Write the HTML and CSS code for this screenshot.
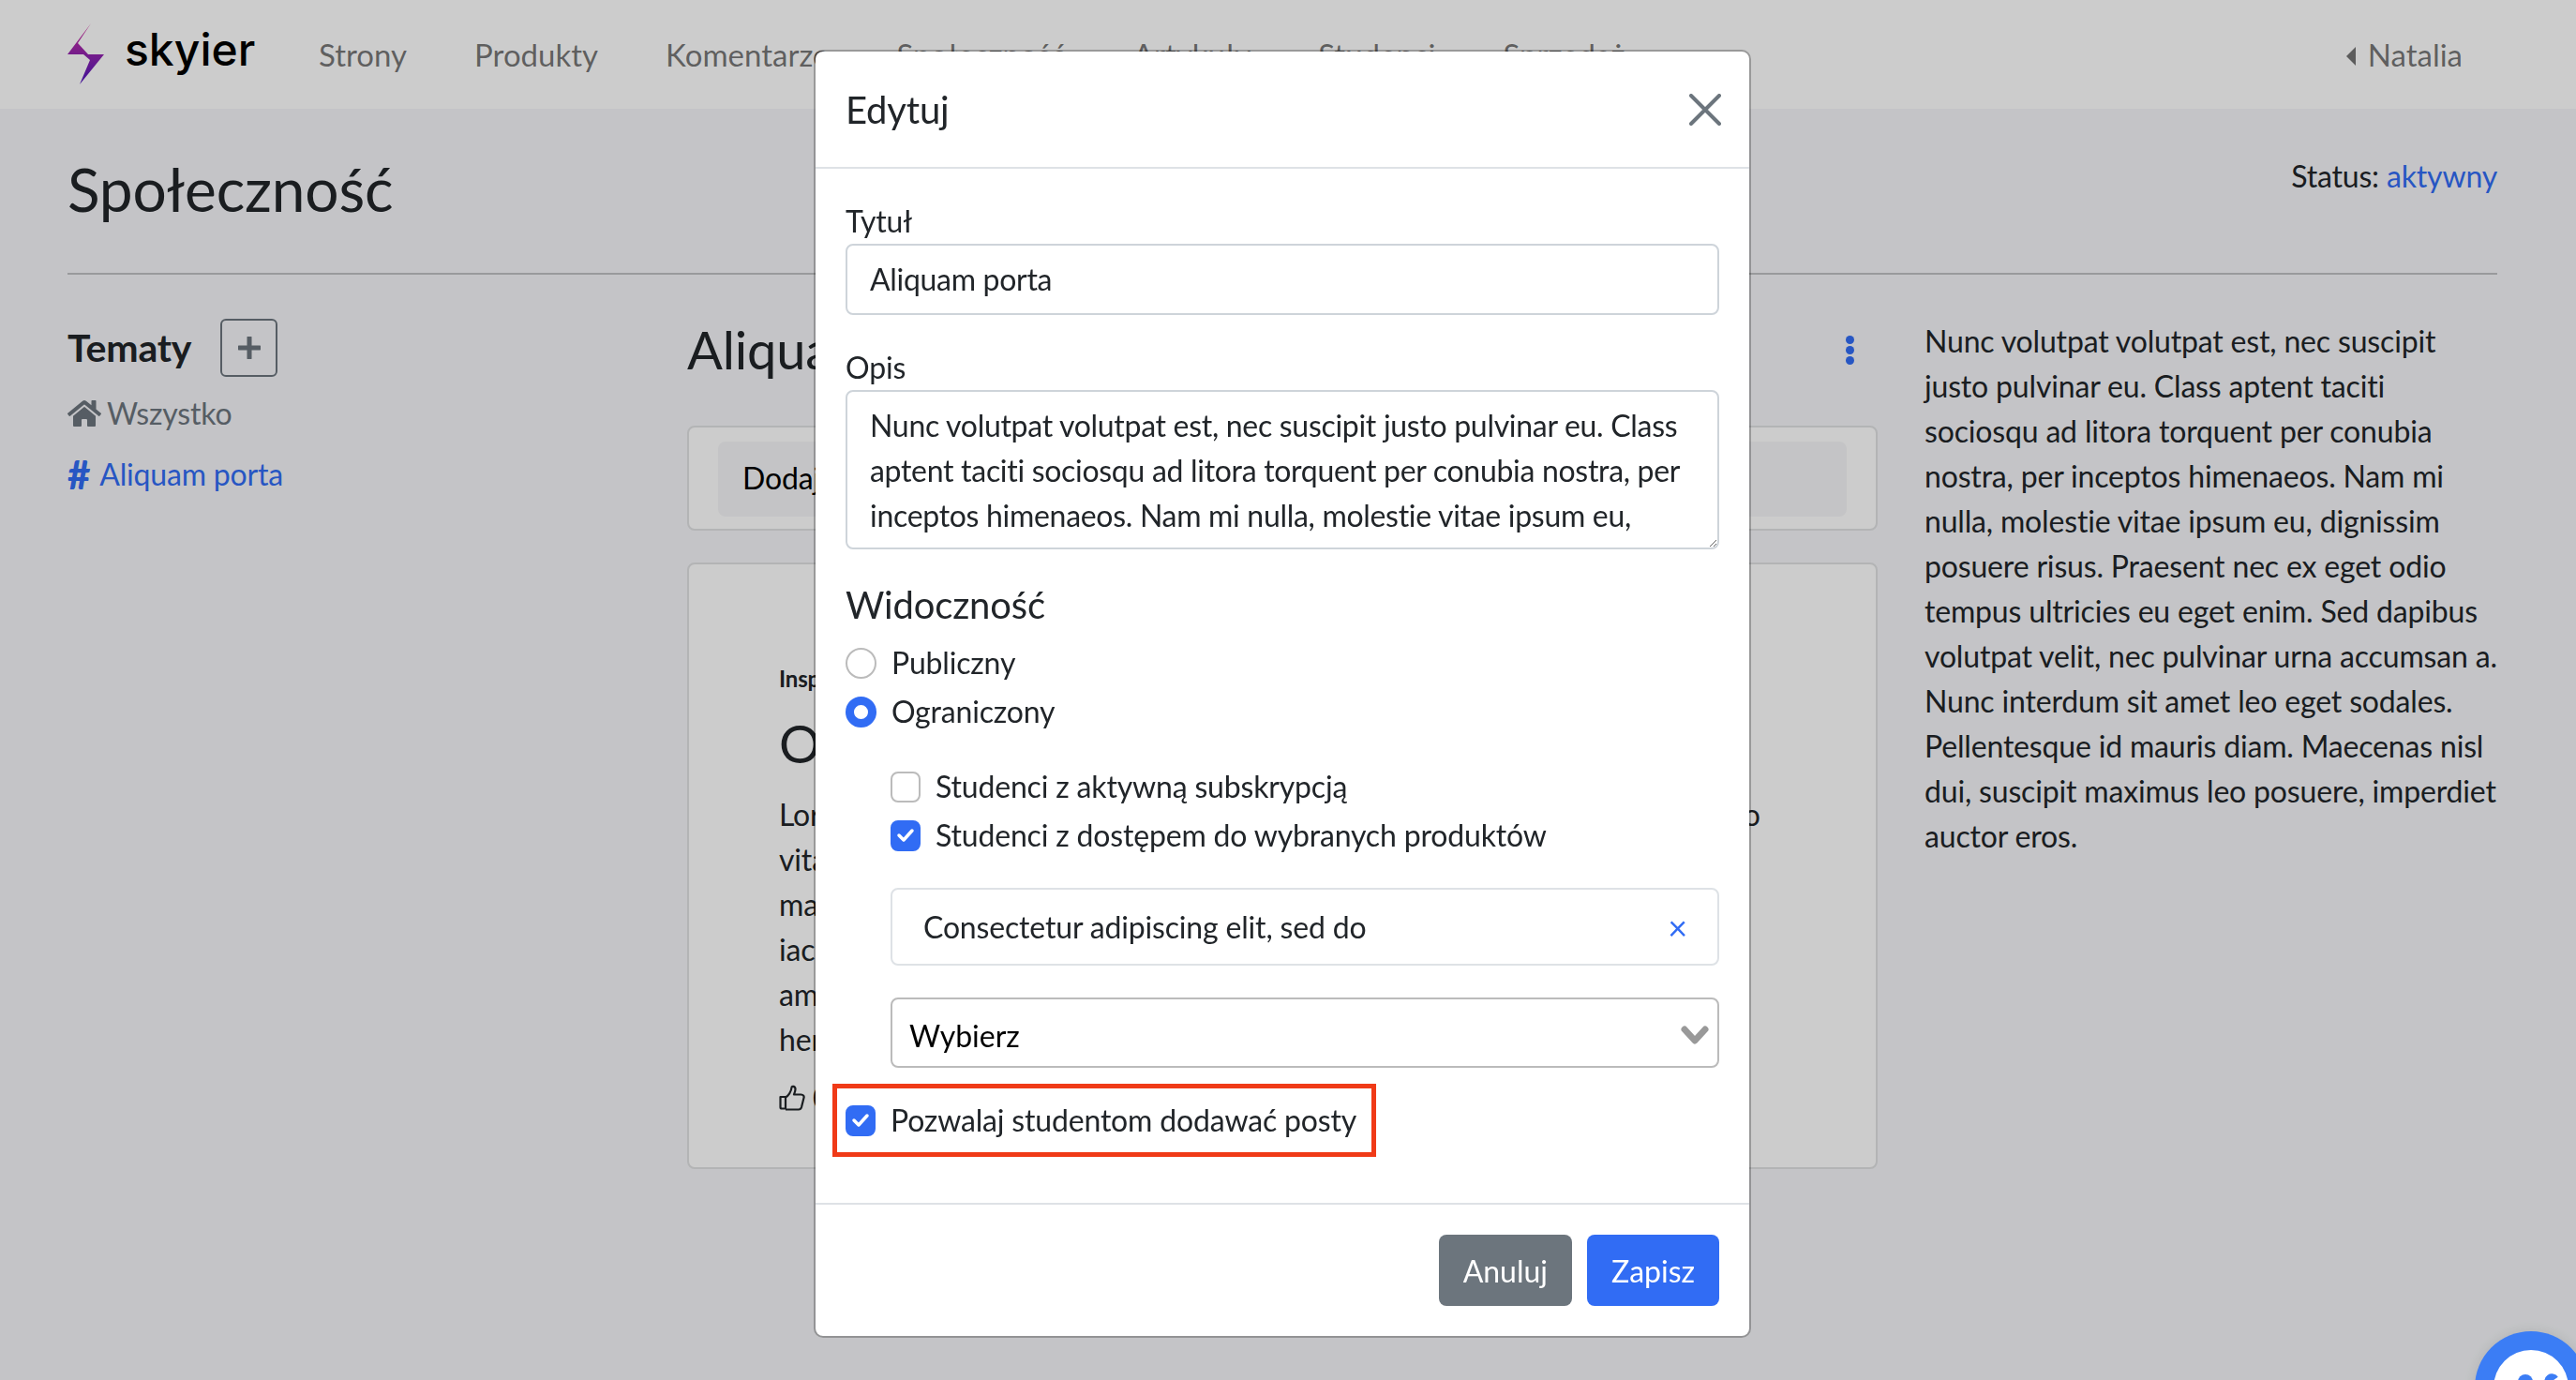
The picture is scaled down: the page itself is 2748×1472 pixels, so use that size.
FILE: index.html
```html
<!DOCTYPE html>
<html lang="pl">

<head>
    <meta charset="UTF-8">
    <title>Społeczność</title>
    <link rel="stylesheet" href="styles.css">
</head>

<body>
    <header class="navbar">
        <a class="logo">
            <svg class="logo-bolt" width="40" height="66" viewBox="0 0 40 66">
                <defs>
                    <linearGradient id="bolt" x1="0" y1="0" x2="0" y2="1">
                        <stop offset="0" stop-color="#d8339f" />
                        <stop offset="1" stop-color="#4f16bd" />
                    </linearGradient>
                </defs>
                <polygon fill="url(#bolt)" points="25,0 0,33 17,33 24,39 13,65 39,33 22,33 11,21" />
            </svg>
            <span class="logo-text">skyier</span>
        </a>
        <nav class="nav-links">
            <a>Strony</a>
            <a>Produkty</a>
            <a>Komentarze</a>
            <a>Społeczność</a>
            <a>Artykuły</a>
            <a>Studenci</a>
            <a>Sprzedaż</a>
        </nav>
        <a class="nav-user"><span class="caret-left"></span>Natalia</a>
    </header>

    <main class="page">
        <div class="page-title">
            <h1>Społeczność</h1>
            <div class="status">Status: <a class="link">aktywny</a></div>
        </div>
        <div class="columns">
            <aside class="topics">
                <div class="topics-head">
                    <h2>Tematy</h2>
                    <button class="btn-add">
                        <svg width="24" height="24" viewBox="0 0 24 24">
                            <path d="M12 1v22M1 12h22" stroke="#6c757d" stroke-width="5" stroke-linecap="round" />
                        </svg>
                    </button>
                </div>
                <a class="topic topic-all">
                    <svg width="36" height="32" viewBox="0 0 576 512">
                        <path fill="currentColor" d="M280.37 148.26L96 300.11V464a16 16 0 0 0 16 16l112.06-.29a16 16 0 0 0 15.92-16V368a16 16 0 0 1 16-16h64a16 16 0 0 1 16 16v95.64a16 16 0 0 0 16 16.05L464 480a16 16 0 0 0 16-16V300L295.67 148.26a12.19 12.19 0 0 0-15.3 0zM571.6 251.47L488 182.56V44.05a12 12 0 0 0-12-12h-56a12 12 0 0 0-12 12v72.61L318.47 43a48 48 0 0 0-61 0L4.34 251.47a12 12 0 0 0-1.6 16.9l25.5 31A12 12 0 0 0 45.15 301l235.22-193.74a12.19 12.19 0 0 1 15.3 0L530.9 301a12 12 0 0 0 16.9-1.6l25.5-31a12 12 0 0 0-1.7-16.93z" />
                    </svg>
                    Wszystko
                </a>
                <a class="topic link"><span class="topic-hash">#</span>Aliquam porta</a>
            </aside>

            <section class="feed">
                <div class="feed-head">
                    <h2>Aliquam porta</h2>
                    <span class="dots"><i></i><i></i><i></i></span>
                </div>
                <div class="card card-add">
                    <div class="fake-input">Dodaj post</div>
                </div>
                <article class="card card-post">
                    <div class="post-cat">Inspiracje</div>
                    <h3>Omnis iste natus</h3>
                    <p>Lorem ipsum dolor sit amet, consectetur adipiscing elit. Vivamus lacinia odio vitae non<br>
                        mauris vestibulum<br>
                        iaculis sed<br>
                        amet dolor<br>
                        hendrerit</p>
                    <div class="post-likes">
                        <svg width="28" height="28" viewBox="0 0 28 28" fill="none" stroke="currentColor" stroke-width="2.2" stroke-linejoin="round">
                            <path d="M1.5 13h5.5v12.5H3a1.5 1.5 0 0 1-1.5-1.500z" />
                            <path d="M7 13.500c3-1.500 6-6 6.500-10.500 0-2 4-1.500 4 1.800 0 2-1 4.500-1.500 5.700h7.500c2.500 0 3.500 2 3 3.500l-2.500 10c-.5 1.500-1.500 2.500-3 2.500H7" />
                        </svg>
                        0
                    </div>
                </article>
            </section>

            <aside class="about">
                Nunc volutpat volutpat est, nec suscipit justo pulvinar eu. Class aptent taciti sociosqu ad litora torquent per conubia nostra, per inceptos himenaeos. Nam mi nulla, molestie vitae ipsum eu, dignissim posuere risus. Praesent nec ex eget odio tempus ultricies eu eget enim. Sed dapibus volutpat velit, nec pulvinar urna accumsan a. Nunc interdum sit amet leo eget sodales. Pellentesque id mauris diam. Maecenas nisl dui, suscipit maximus leo posuere, imperdiet auctor eros.
            </aside>
        </div>
    </main>

    <div class="backdrop">
        <div class="modal">
            <div class="modal-header">
                <h4>Edytuj</h4>
                <svg class="modal-close" width="34" height="34" viewBox="0 0 34 34">
                    <path d="M2 2l30 30M32 2L2 32" stroke="#6c757d" stroke-width="4" stroke-linecap="round" />
                </svg>
            </div>
            <div class="modal-body">
                <label class="form-label">Tytuł</label>
                <input class="form-input" type="text" value="Aliquam porta">

                <label class="form-label label-opis">Opis</label>
                <textarea class="form-input form-textarea">Nunc volutpat volutpat est, nec suscipit justo pulvinar eu. Class aptent taciti sociosqu ad litora torquent per conubia nostra, per inceptos himenaeos. Nam mi nulla, molestie vitae ipsum eu, dignissim posuere risus. Praesent nec ex eget odio tempus ultricies eu eget enim.</textarea>

                <h5>Widoczność</h5>
                <div class="option option-first"><span class="radio"></span>Publiczny</div>
                <div class="option"><span class="radio radio-on"></span>Ograniczony</div>

                <div class="nested">
                    <div class="option"><span class="check"></span>Studenci z aktywną subskrypcją</div>
                    <div class="option">
                        <span class="check check-on">
                            <svg width="20" height="16" viewBox="0 0 20 16"><path d="M3 8l5 5 9-10" fill="none" stroke="#fff" stroke-width="3.500" stroke-linecap="round" stroke-linejoin="round" /></svg>
                        </span>
                        Studenci z dostępem do wybranych produktów
                    </div>
                    <div class="chip">
                        <span>Consectetur adipiscing elit, sed do</span>
                        <span class="chip-x">×</span>
                    </div>
                    <div class="select-wrap">
                        <select class="select">
                            <option>Wybierz</option>
                        </select>
                        <svg class="select-arrow" width="30" height="22" viewBox="0 0 30 22">
                            <path d="M4 5l11 12L26 5" fill="none" stroke="#999" stroke-width="7" stroke-linecap="round" stroke-linejoin="round" />
                        </svg>
                    </div>
                </div>

                <div class="option option-last">
                    <span class="check check-on">
                        <svg width="20" height="16" viewBox="0 0 20 16"><path d="M3 8l5 5 9-10" fill="none" stroke="#fff" stroke-width="3.500" stroke-linecap="round" stroke-linejoin="round" /></svg>
                    </span>
                    Pozwalaj studentom dodawać posty
                    <span class="highlight"></span>
                </div>
            </div>
            <div class="modal-footer">
                <button class="btn btn-gray">Anuluj</button>
                <button class="btn btn-blue">Zapisz</button>
            </div>
        </div>
    </div>

    <div class="chat">
        <span class="chat-face">
            <i></i><i></i>
        </span>
    </div>
</body>

</html>
```

FILE: styles.css
```css
* {
    margin: 0;
    padding: 0;
    box-sizing: border-box
}

html,
body {
    height: 100%;
    overflow: hidden
}

body {
    font-family: Lato, "Liberation Sans", sans-serif;
    font-size: 32px;
    line-height: 48px;
    letter-spacing: -.17px;
    color: #212529;
    background: #f5f6f9
}

.link {
    color: #316cf4
}

/* navbar */
.navbar {
    display: flex;
    align-items: center;
    height: 116px;
    padding: 0 121px 0 72px;
    background: #fff
}

.logo {
    display: flex;
    align-items: center;
    width: 232px
}

.logo-text {
    margin-left: 21px;
    font-family: Inter, sans-serif;
    font-size: 48px;
    font-weight: 500;
    line-height: 60px;
    letter-spacing: 0;
    color: #000;
    margin-top: -10px
}

.logo-bolt {
    margin-top: -1px
}

.nav-links {
    display: flex;
    flex: 1
}

.nav-links a {
    padding: 0 36px;
    font-size: 33px;
    letter-spacing: 0;
    color: rgba(0, 0, 0, .55)
}

.nav-user {
    display: flex;
    align-items: center;
    font-size: 33px;
    letter-spacing: 0;
    color: rgba(0, 0, 0, .55)
}

.caret-left {
    width: 0;
    height: 0;
    margin-right: 13px;
    margin-top: 3px;
    border-top: 10px solid transparent;
    border-bottom: 10px solid transparent;
    border-right: 10px solid rgba(0, 0, 0, .55)
}

/* page */
.page {
    padding: 0 84px 0 72px
}

.page-title {
    display: flex;
    justify-content: space-between;
    height: 177px;
    padding-top: 48px;
    border-bottom: 2px solid #c0c1c3
}

.page-title h1 {
    font-size: 64px;
    line-height: 76px;
    font-weight: 400;
    letter-spacing: -.2px
}

.columns {
    display: grid;
    grid-template-columns: 611px 1270px 611px;
    column-gap: 50px;
    padding-top: 47px
}

.topics-head {
    display: flex;
    align-items: center;
    gap: 31px;
    margin-bottom: 15px
}

.topics-head h2 {
    font-size: 41px;
    font-weight: 700;
    line-height: 48px
}

.btn-add {
    display: flex;
    align-items: center;
    justify-content: center;
    width: 61px;
    height: 62px;
    background: transparent;
    border: 2px solid #6c757d;
    border-radius: 6px
}

.topic {
    display: flex;
    align-items: center;
    margin-bottom: 17px
}

.topic-all {
    gap: 6px;
    color: #6c757d
}

.topic-hash {
    margin-right: 10px;
    font-size: 42px;
    font-weight: 900
}

.feed-head {
    display: flex;
    align-items: center;
    justify-content: space-between;
    height: 66px;
    padding-right: 25px;
    margin-bottom: 48px
}

.feed-head h2 {
    font-size: 56px;
    font-weight: 400;
    line-height: 66px
}

.dots {
    display: flex;
    flex-direction: column;
    gap: 2px
}

.dots i {
    width: 9px;
    height: 9px;
    border-radius: 50%;
    background: #316cf4
}

.card {
    background: #fff;
    border: 2px solid #e0e1e3;
    border-radius: 8px
}

.card-add {
    height: 112px;
    padding: 15px 31px;
    margin-bottom: 34px
}

.fake-input {
    height: 80px;
    padding: 15px 26px;
    background: #f5f6f8;
    border-radius: 8px;
    color: #000
}

.card-post {
    height: 647px;
    padding: 104px 96px 0
}

.post-cat {
    font-size: 24px;
    font-weight: 700;
    line-height: 36px;
    margin-bottom: 18px
}

.card-post h3 {
    font-size: 56px;
    font-weight: 400;
    line-height: 66px;
    margin-bottom: 19px
}

.post-likes {
    display: flex;
    align-items: center;
    gap: 8px;
    margin-top: 14px
}

/* modal */
.backdrop {
    position: fixed;
    top: 0;
    left: 0;
    right: 0;
    bottom: 0;
    padding: 53px 12px 0 0;
    background: rgba(0, 0, 0, .2)
}

.modal {
    width: 1000px;
    margin: 0 auto;
    background: #fff;
    border: 2px solid rgba(0, 0, 0, .25);
    border-radius: 10px;
    background-clip: padding-box
}

.modal-header {
    display: flex;
    align-items: center;
    justify-content: space-between;
    height: 125px;
    padding: 0 30px 0 32px;
    border-bottom: 2px solid #dee2e6
}

.modal-header h4 {
    font-size: 40px;
    font-weight: 400;
    line-height: 48px
}

.modal-body {
    padding: 32px 32px 64px
}

.form-label {
    display: block
}

.label-opis {
    margin-top: 32px
}

.form-input {
    display: block;
    width: 100%;
    height: 76px;
    padding: 10px 24px 12px;
    font-family: inherit;
    font-size: 32px;
    line-height: 48px;
    letter-spacing: -.3px;
    color: #212529;
    background: #fff;
    border: 2px solid #ced4da;
    border-radius: 8px;
    outline: none
}

.form-textarea {
    height: 170px;
    margin-bottom: 0;
    padding-top: 12px;
    overflow: hidden;
    resize: vertical
}

.modal-body h5 {
    margin-top: 35px;
    font-size: 40px;
    font-weight: 400;
    line-height: 48px
}

.option {
    display: flex;
    align-items: center;
    gap: 16px;
    margin-top: 4px
}

.option-first {
    margin-top: 14px
}

.option-last {
    position: relative;
    margin-top: 32px
}

.radio {
    width: 33px;
    height: 33px;
    background: #fff;
    border: 2px solid #bbb;
    border-radius: 50%
}

.radio-on {
    border: 9px solid #316cf4
}

.check {
    display: flex;
    align-items: center;
    justify-content: center;
    width: 32px;
    height: 33px;
    background: #fff;
    border: 2px solid #bbb;
    border-radius: 8px
}

.check-on {
    background: #316cf4;
    border-color: #316cf4
}

.nested {
    margin-top: 32px;
    margin-left: 48px
}

.chip {
    display: flex;
    align-items: center;
    justify-content: space-between;
    height: 83px;
    padding: 0 32px 0 33px;
    margin-top: 32px;
    border: 2px solid #dee2e6;
    border-radius: 8px
}

.chip-x {
    color: #316cf4;
    font-size: 36px
}

.select-wrap {
    position: relative;
    margin-top: 34px
}

.select {
    display: block;
    width: 100%;
    height: 75px;
    padding: 6px 18px 0;
    font-family: inherit;
    font-size: 32px;
    color: #000;
    background: #fff;
    border: 2px solid #bbb;
    border-radius: 8px;
    appearance: none
}

.select-arrow {
    position: absolute;
    top: 29px;
    right: 11px
}

.highlight {
    position: absolute;
    top: -15px;
    left: -14px;
    width: 580px;
    height: 78px;
    border: 5px solid #f03a17
}

.modal-footer {
    display: flex;
    justify-content: flex-end;
    gap: 16px;
    padding: 32px;
    border-top: 2px solid #dee2e6
}

.btn {
    height: 76px;
    padding: 0 26px;
    font-family: inherit;
    font-size: 32px;
    color: #fff;
    border: none;
    border-radius: 8px
}

.btn-gray {
    background: #6c757d
}

.btn-blue {
    background: #316cf4
}

/* chat bubble */
.chat {
    position: fixed;
    top: 1420px;
    left: 2640px;
    width: 120px;
    height: 120px;
    padding: 20px;
    background: #3b7df5;
    border-radius: 50%;
    box-shadow: 0 0 16px rgba(0, 0, 0, .1)
}

.chat-face {
    display: block;
    position: relative;
    width: 80px;
    height: 80px;
    background: #fff;
    border-radius: 50%
}

.chat-face i {
    position: absolute;
    top: 26px;
    width: 16px;
    height: 8px;
    background: #3b7df5;
    border-radius: 8px 8px 0 0
}

.chat-face i:first-child {
    left: 26px
}

.chat-face i:last-child {
    left: 52px;
    transform: rotate(-35deg)
}
```
